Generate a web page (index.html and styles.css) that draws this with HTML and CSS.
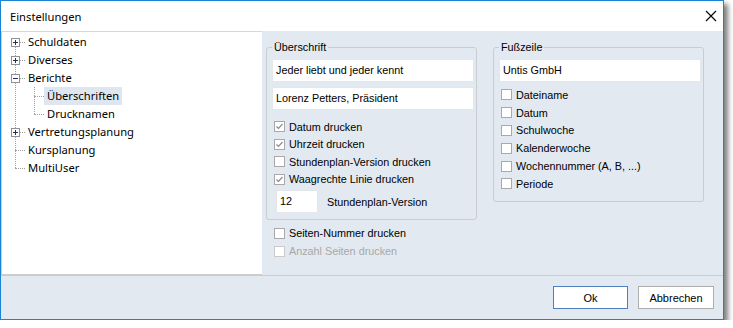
FILE: index.html
```html
<!DOCTYPE html>
<html lang="de">
<head>
    <meta charset="UTF-8">
    <title>Einstellungen</title>
    <link rel="stylesheet" href="styles.css">
</head>
<body>

    <div class="window">
        <div class="titlebar">
            <span class="title">Einstellungen</span>
            <svg class="close" width="12" height="12" viewBox="0 0 12 12">
                <path d="M1 1L11 11M11 1L1 11" stroke="#000" stroke-width="1.1" fill="none"/>
            </svg>
        </div>

        <div class="main">
            <div class="tree">
                <ul class="tree-root">
                    <li>
                        <div class="row">
                            <svg class="exp" width="9" height="9"><rect x=".5" y=".5" width="8" height="8" fill="#fff" stroke="#919191"/><path d="M2 4.5h5M4.5 2v5" stroke="#22335c"/></svg>
                            <span class="label">Schuldaten</span>
                        </div>
                    </li>
                    <li>
                        <div class="row">
                            <svg class="exp" width="9" height="9"><rect x=".5" y=".5" width="8" height="8" fill="#fff" stroke="#919191"/><path d="M2 4.5h5M4.5 2v5" stroke="#22335c"/></svg>
                            <span class="label">Diverses</span>
                        </div>
                    </li>
                    <li>
                        <div class="row">
                            <svg class="exp" width="9" height="9"><rect x=".5" y=".5" width="8" height="8" fill="#fff" stroke="#919191"/><path d="M2 4.5h5" stroke="#22335c"/></svg>
                            <span class="label">Berichte</span>
                        </div>
                        <ul class="tree-sub">
                            <li><div class="row"><span class="label selected">Überschriften</span></div></li>
                            <li><div class="row"><span class="label">Drucknamen</span></div></li>
                        </ul>
                    </li>
                    <li>
                        <div class="row">
                            <svg class="exp" width="9" height="9"><rect x=".5" y=".5" width="8" height="8" fill="#fff" stroke="#919191"/><path d="M2 4.5h5M4.5 2v5" stroke="#22335c"/></svg>
                            <span class="label">Vertretungsplanung</span>
                        </div>
                    </li>
                    <li><div class="row"><span class="label">Kursplanung</span></div></li>
                    <li><div class="row"><span class="label">MultiUser</span></div></li>
                </ul>
            </div>

            <div class="panel">
                <div class="column">
                    <fieldset class="group">
                        <legend>Überschrift</legend>
                        <div class="textbox">Jeder liebt und jeder kennt</div>
                        <div class="textbox">Lorenz Petters, Präsident</div>
                        <div class="checks">
                            <div class="check"><span class="box checked"><svg width="9" height="9" viewBox="0 0 9 9"><path d="M1.5 4.5L3.5 6.5L7.5 2" stroke="#8c8c8c" stroke-width="1.2" fill="none"/></svg></span>Datum drucken</div>
                            <div class="check"><span class="box checked"><svg width="9" height="9" viewBox="0 0 9 9"><path d="M1.5 4.5L3.5 6.5L7.5 2" stroke="#8c8c8c" stroke-width="1.2" fill="none"/></svg></span>Uhrzeit drucken</div>
                            <div class="check"><span class="box"></span>Stundenplan-Version drucken</div>
                            <div class="check"><span class="box checked"><svg width="9" height="9" viewBox="0 0 9 9"><path d="M1.5 4.5L3.5 6.5L7.5 2" stroke="#8c8c8c" stroke-width="1.2" fill="none"/></svg></span>Waagrechte Linie drucken</div>
                        </div>
                        <div class="version">
                            <div class="textbox small">12</div>
                            <span>Stundenplan-Version</span>
                        </div>
                    </fieldset>
                    <div class="extra">
                        <div class="check"><span class="box"></span>Seiten-Nummer drucken</div>
                        <div class="check disabled"><span class="box"></span>Anzahl Seiten drucken</div>
                    </div>
                </div>

                <fieldset class="group footer-group">
                    <legend>Fußzeile</legend>
                    <div class="textbox">Untis GmbH</div>
                    <div class="checks wide">
                        <div class="check"><span class="box"></span>Dateiname</div>
                        <div class="check"><span class="box"></span>Datum</div>
                        <div class="check"><span class="box"></span>Schulwoche</div>
                        <div class="check"><span class="box"></span>Kalenderwoche</div>
                        <div class="check"><span class="box"></span>Wochennummer (A, B, ...)</div>
                        <div class="check"><span class="box"></span>Periode</div>
                    </div>
                </fieldset>
            </div>
        </div>

        <div class="buttons">
            <button class="btn default">Ok</button>
            <button class="btn">Abbrechen</button>
        </div>
    </div>

</body>
</html>
```

FILE: styles.css
```css
/* Dialog window */
body {
    margin: 0;
    background-color: #fff;
}
.window {
    width: 722px;
    height: 318px;
    border: 1px solid #1883d7;
    background-color: #e2e9f1;
    box-shadow: 4px 4px 5px rgba(0, 0, 0, 0.5);
    display: flex;
    flex-direction: column;
}
.titlebar {
    height: 30px;
    background-color: #fff;
    display: flex;
    align-items: center;
    justify-content: space-between;
    padding: 0 6px 0 9px;
    font-family: "Noto Sans", sans-serif;
    font-size: 11.2px;
    color: #000;
}
.title {
    margin-top: 1px;
}
.main {
    height: 244px;
    display: flex;
}

/* Tree on the left */
.tree {
    width: 260px;
    height: 241px;
    background-color: #fff;
    border-left: 1px solid #cfcfcf;
    border-top: 1px solid #d8d8d8;
    border-bottom: 2px solid #cdcdcd;
    padding-top: 1px;
    box-sizing: content-box;
    font-family: "Noto Sans", sans-serif;
    font-size: 11.2px;
    color: #000;
}
.tree ul {
    list-style: none;
    margin: 0;
    padding: 0;
    position: relative;
}
.tree-root::before {
    content: "";
    position: absolute;
    left: 13px;
    top: 9px;
    bottom: 9px;
    border-left: 1px dotted #a0a0a0;
}
.tree-sub::before {
    content: "";
    position: absolute;
    left: 32px;
    top: 0;
    bottom: 9px;
    border-left: 1px dotted #a0a0a0;
}
.row {
    position: relative;
    height: 18px;
    display: flex;
    align-items: center;
    padding-left: 23px;
}
.row::before {
    content: "";
    position: absolute;
    left: 13px;
    top: 9px;
    width: 10px;
    border-top: 1px dotted #a0a0a0;
}
.tree-sub .row {
    padding-left: 42px;
}
.tree-sub .row::before {
    left: 32px;
}
.exp {
    position: absolute;
    left: 9px;
    top: 5px;
    z-index: 1;
}
.label {
    padding: 0 3px;
    line-height: 18px;
}
.label.selected {
    background-color: #dfe6ef;
}

/* Right side with the group boxes */
.panel {
    flex: 1;
    display: flex;
    align-items: flex-start;
    gap: 16px;
    padding: 9px 0 0 4px;
    font-family: "Liberation Sans", Arial, sans-serif;
    font-size: 10.8px;
    color: #000;
}
.column {
    width: 211px;
}
.group {
    margin: 0;
    width: 211px;
    box-sizing: border-box;
    border: 1px solid #c9cdd3;
    border-radius: 3px;
    padding: 0 2px 6px 5px;
}
.group legend {
    padding: 0 2px;
    line-height: 14px;
}
.textbox {
    height: 23px;
    box-sizing: border-box;
    border: 1px solid #e4e6e9;
    background-color: #fff;
    padding: 0 3px;
    line-height: 21px;
    margin-top: 5px;
    white-space: nowrap;
}
.textbox.small {
    width: 42px;
    margin: 0 0 0 4px;
}
.checks {
    margin-top: 8px;
}
.check {
    height: 17.5px;
    display: flex;
    align-items: center;
    gap: 4px;
    white-space: nowrap;
}
.checks.wide {
    margin-top: 4px;
}
.checks.wide .check {
    height: 17.8px;
}
.footer-group {
    padding-bottom: 8px;
}
.box {
    width: 11px;
    height: 11px;
    box-sizing: border-box;
    border: 1px solid #a9a9a9;
    background-color: #fff;
    margin-left: 2px;
    display: flex;
    align-items: center;
    justify-content: center;
}
.version {
    display: flex;
    align-items: center;
    gap: 9px;
    margin-top: 2px;
}
.extra {
    margin-top: 4px;
    padding-left: 6px;
}
.extra .check {
    height: 18px;
}
.check.disabled {
    color: #a8a8a8;
}
.check.disabled .box {
    border-color: #cacaca;
}

/* Bottom buttons */
.buttons {
    height: 43px;
    box-sizing: border-box;
    border-top: 1px solid #c7ccd2;
    display: flex;
    justify-content: flex-end;
    gap: 10px;
    padding: 10px 9px 0 0;
}
.btn {
    height: 23px;
    width: 76px;
    background-color: #fff;
    border: 1px solid #adadad;
    font-family: "Liberation Sans", Arial, sans-serif;
    font-size: 11px;
    color: #000;
    padding: 0;
}
.btn.default {
    width: 75px;
    border-color: #4f7fbd;
}
```
